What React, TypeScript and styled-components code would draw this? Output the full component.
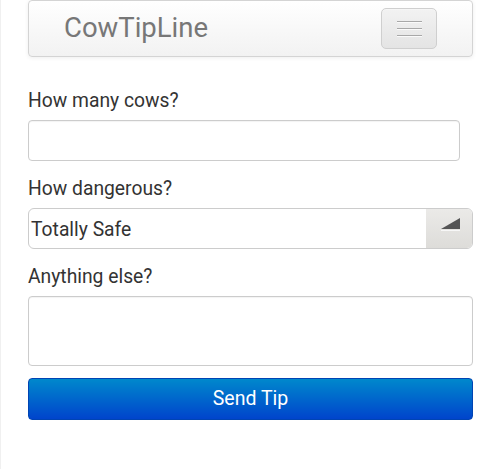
import React from "react";
import styled, { createGlobalStyle } from "styled-components";

const Global = createGlobalStyle`
  html, body { margin: 0; padding: 0; background: #fff; }
  body {
    font-family: Roboto, "Noto Sans", "Liberation Sans", sans-serif;
    color: #333;
    min-height: 469px;
    border-left: 1px solid #f0f0f0;
    box-sizing: border-box;
  }
  * { box-sizing: border-box; }
`;

const Page = styled.div`
  padding: 0 27px 0 27px;
  display: flex;
  flex-direction: column;
`;

const Navbar = styled.div`
  height: 57px;
  border: 1px solid #d4d4d4;
  border-radius: 4px;
  background: linear-gradient(#ffffff, #f2f2f2);
  box-shadow: 0 1px 4px rgba(0, 0, 0, 0.07);
  display: flex;
  align-items: center;
  justify-content: space-between;
  padding: 0 35px 2px 35px;
`;

const Brand = styled.div`
  font-size: 27.5px;
  color: #777;
  line-height: 1;
  padding-top: 1px;
`;

const Toggle = styled.button`
  width: 56px;
  height: 41px;
  margin-top: 2px;
  border: 1px solid #cfcfcf;
  border-radius: 5px;
  background: linear-gradient(#f2f2f2, #e4e4e4);
  box-shadow: inset 0 1px 0 rgba(255, 255, 255, 0.3);
  display: flex;
  flex-direction: column;
  align-items: center;
  justify-content: center;
  gap: 6px;
  padding: 0;
`;

const Bar = styled.span`
  display: block;
  width: 25px;
  height: 1px;
  background: #a8a8a8;
  box-shadow: 0 1px 0 #fafafa;
`;

const Form = styled.form`
  display: flex;
  flex-direction: column;
  padding-top: 32px;
`;

const Label = styled.label`
  font-size: 19.3px;
  line-height: 24px;
  color: #333;
  margin-left: 0;
  margin-bottom: 7px;
`;

const TextInput = styled.input<{ $narrow?: boolean }>`
  width: ${(p) => (p.$narrow ? "432px" : "100%")};
  height: 41px;
  border: 1px solid #ccc;
  border-radius: 4px;
  box-shadow: inset 0 1px 1px rgba(0, 0, 0, 0.05);
  margin-bottom: 16px;
  font: inherit;
  font-size: 19px;
  outline: none;
`;

const Select = styled.div`
  height: 41px;
  border: 1px solid #ccc;
  border-radius: 6px;
  display: flex;
  overflow: hidden;
  margin-bottom: 16px;
  background: #fff;
`;

const SelectValue = styled.div`
  flex: 1;
  font-size: 19.3px;
  color: #333;
  padding-left: 2px;
  display: flex;
  align-items: center;
  padding-top: 1px;
`;

const SelectArrow = styled.div`
  width: 46px;
  background: linear-gradient(#ebeae8, #dddcd9);
  display: flex;
  align-items: flex-start;
  justify-content: center;
  padding-top: 9px;
  padding-left: 2px;
`;

const TextArea = styled.textarea`
  width: 100%;
  height: 70px;
  border: 1px solid #ccc;
  border-radius: 4px;
  box-shadow: inset 0 1px 1px rgba(0, 0, 0, 0.05);
  resize: none;
  margin-bottom: 12px;
  font: inherit;
  outline: none;
  display: block;
`;

const SubmitButton = styled.button`
  width: 100%;
  height: 42px;
  border: 1px solid #0044b3;
  border-radius: 4px;
  background: linear-gradient(#0088cc, #0044cc);
  color: #fff;
  font-family: inherit;
  font-size: 19.5px;
  padding: 0 0 1px;
`;

export default function App() {
  return (
    <>
      <Global />
      <Page>
        <Navbar>
          <Brand>CowTipLine</Brand>
          <Toggle type="button" aria-label="menu">
            <Bar />
            <Bar />
            <Bar />
          </Toggle>
        </Navbar>
        <Form onSubmit={(e) => e.preventDefault()}>
          <Label>How many cows?</Label>
          <TextInput $narrow type="text" />
          <Label>How dangerous?</Label>
          <Select>
            <SelectValue>Totally Safe</SelectValue>
            <SelectArrow>
              <svg width="21" height="13" viewBox="0 0 21 13">
                <polygon points="1,11 20,0 20,11" fill="#555" />
                <line x1="1" y1="12.5" x2="20" y2="12.5" stroke="#f7f7f7" strokeWidth="1" />
              </svg>
            </SelectArrow>
          </Select>
          <Label>Anything else?</Label>
          <TextArea />
          <SubmitButton type="submit">Send Tip</SubmitButton>
        </Form>
      </Page>
    </>
  );
}
